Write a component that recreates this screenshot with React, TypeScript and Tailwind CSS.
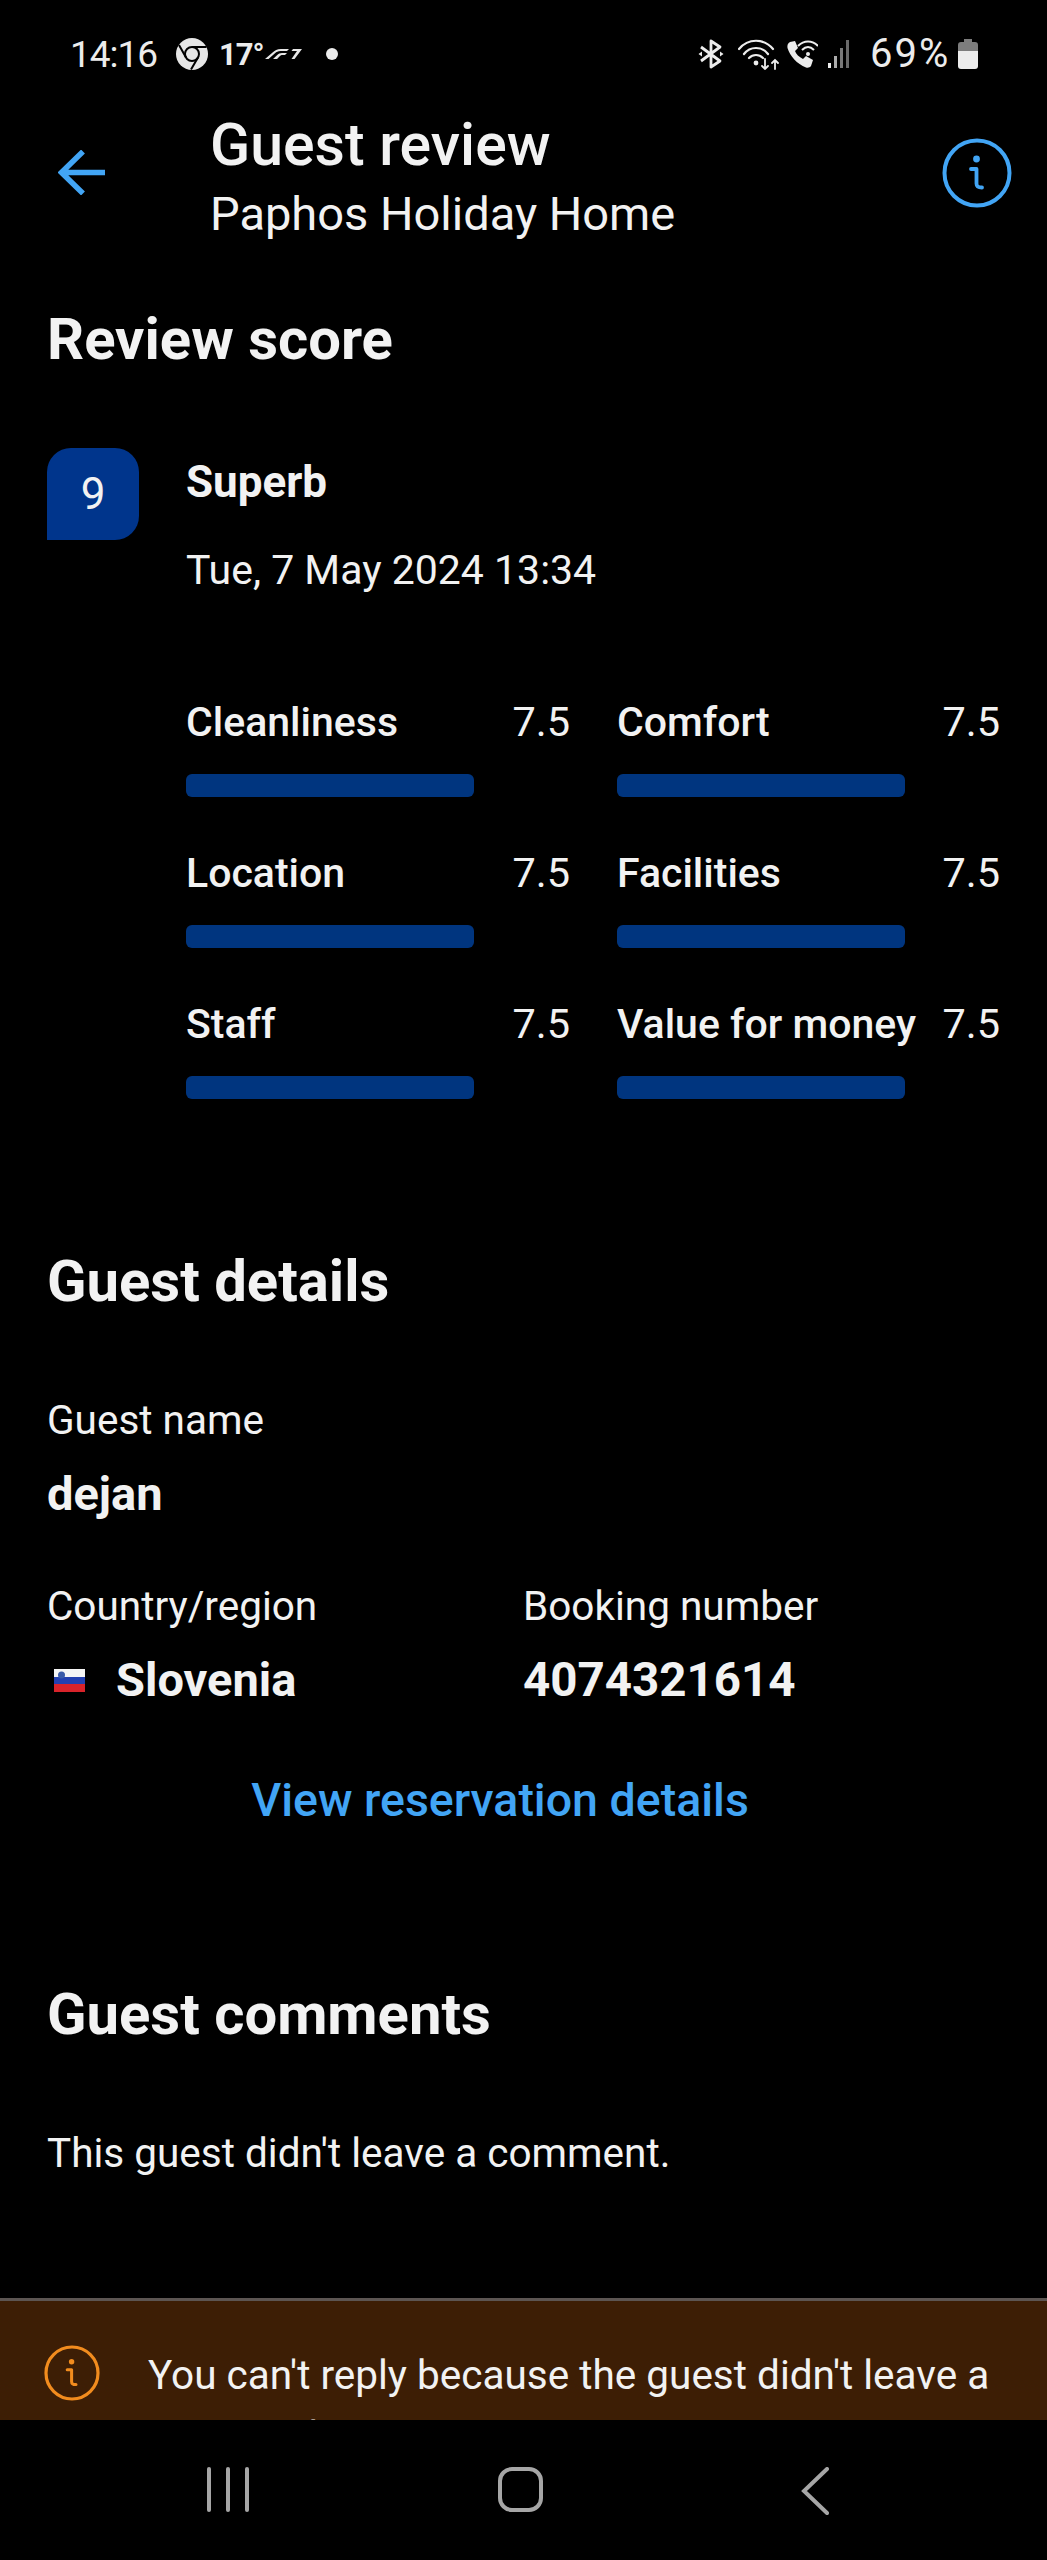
import React from 'react';

const ratings = [
  ['Cleanliness', 'Comfort'],
  ['Location', 'Facilities'],
  ['Staff', 'Value for money'],
];

const InfoIcon = ({ className }: { className: string }) => (
  <svg viewBox="0 0 70 70" className={className} fill="none" stroke="currentColor">
    <circle cx="35" cy="35" r="32.5" strokeWidth="4" />
    <circle cx="34.5" cy="21" r="3.4" fill="currentColor" stroke="none" />
    <path d="M29 31h5.5v14.5c0 3 1.5 4 5.5 4" strokeWidth="3.8" strokeLinecap="round" strokeLinejoin="round" />
  </svg>
);

const StatusLeft = () => (
  <div className="flex items-center">
    <span className="text-[37px] leading-none text-[#ececec] w-[106px] tracking-[-1px]">14:16</span>
    <svg viewBox="0 0 32 32" className="w-[32px] h-[32px]">
      <circle cx="16" cy="16" r="16" fill="#e6e6e6" />
      <circle cx="16" cy="16" r="7" fill="none" stroke="#000" strokeWidth="2" />
      <path d="M16 9h14.5M10 19.5 3 7M22 19.5 15 31.5" stroke="#000" strokeWidth="2" fill="none" />
    </svg>
    <span className="ml-[11px] text-[31px] leading-none font-bold text-[#ececec] w-[46px] tracking-[-1px]">17°</span>
    <svg viewBox="0 0 37 10" className="w-[37px] h-[10px]">
      <path d="M0 10 7 4C10 1.500 12 0 16 0H24L22 2H15.500C13 2 11.500 3 10 4.200L3.500 10Z" fill="#e6e6e6" />
      <path d="M8 10 12 6.200C13.500 4.800 15 4 17 4H22L20 6H17.500C16 6 15.500 6.500 14.500 7.500L12 10Z" fill="#e6e6e6" />
      <path d="M28 0H37L29.500 10H26.500L32 2H26.500Z" fill="#e6e6e6" />
    </svg>
    <span className="ml-[24px] w-[12px] h-[12px] rounded-full bg-[#ececec]" />
  </div>
);

const StatusRight = () => (
  <div className="flex items-center">
    <svg viewBox="0 0 26 30" className="w-[26px] h-[30px]" fill="none" stroke="#ececec" strokeWidth="2.800" strokeLinejoin="round">
      <path d="M3 8 22 22 13 28V2L22 8 3 22" />
      <path d="M0.5 15 4 12.5V17.5ZM25.5 15 22 12.5V17.5Z" fill="#ececec" stroke="none" />
    </svg>
    <svg viewBox="0 0 42 32" className="ml-[14px] w-[42px] h-[32px]" fill="none" stroke="#ececec" strokeWidth="2.2" strokeLinecap="round">
      <path d="M1 11C10 0 26 0 35 11" />
      <path d="M6 16C12 8 24 8 30 16" />
      <path d="M11 20C15 16 21 16 25 20" />
      <circle cx="18" cy="25" r="2.4" fill="#ececec" stroke="none" />
      <path d="M27 21V31M24 28l3 3 3-3M37 31V22M34 25l3-3 3 3" strokeWidth="1.8" />
    </svg>
    <svg viewBox="0 0 32 30" className="ml-[6px] w-[32px] h-[30px]" fill="none">
      <path d="M4 3 9 2 12 9 9 12C10 15 13 18 17 20L20 17 27 21 25 27C24 28.500 22 29 20 28.500 11 25 4 17 1.500 9 1 6 2 4 4 3Z" fill="#ececec" />
      <path d="M12 7C18 1 26 1 32 7M16 11C20 7 24 7 28 11" stroke="#ececec" strokeWidth="2" />
      <circle cx="22" cy="15" r="2" fill="#ececec" />
    </svg>
    <div className="ml-[10px] flex items-end gap-[3px] h-[28px] w-[27px]">
      <span className="w-[3px] h-[5px] bg-[#ececec]" />
      <span className="w-[3px] h-[12px] bg-[#ababab]" />
      <span className="w-[3px] h-[20px] bg-[#7a7a7a]" />
      <span className="w-[3px] h-[28px] bg-[#6a6a6a]" />
    </div>
    <span className="ml-[15px] text-[40px] leading-none text-[#ececec] w-[88px] tracking-[2px]">69%</span>
    <svg viewBox="0 0 20 30" className="w-[20px] h-[30px]">
      <path d="M6 0H14V3H17Q20 3 20 6V12H0V6Q0 3 3 3H6Z" fill="#7d7d7d" />
      <path d="M0 12H20V27Q20 30 17 30H3Q0 30 0 27Z" fill="#ececec" />
    </svg>
  </div>
);

const App = () => {
  return (
    <div className="w-[1047px] h-[2560px] bg-black flex flex-col overflow-hidden text-[#f2f2f2] font-['Roboto',sans-serif]">
      {/* Status bar */}
      <div className="h-[108px] shrink-0 flex items-center justify-between pl-[70px] pr-[69px]">
        <StatusLeft />
        <StatusRight />
      </div>

      {/* Header */}
      <div className="h-[142px] shrink-0 flex items-start pl-[58px] pr-[35px]">
        <svg viewBox="0 0 47 45" className="w-[47px] h-[45px] mt-[42px] text-[#42a5f5]" fill="none" stroke="currentColor" strokeWidth="5.500">
          <path d="M47 22.500H4M25 1.500 3.500 22.500 25 43.500" />
        </svg>
        <div className="ml-[105px] flex-1 pt-[2px]">
          <div className="text-[59px] leading-[70px] font-medium">Guest review</div>
          <div className="text-[47px] leading-[68px]">Paphos Holiday Home</div>
        </div>
        <InfoIcon className="w-[70px] h-[70px] mt-[30px] text-[#42a5f5]" />
      </div>

      <div className="flex-1 px-[47px] pt-[57px]">
        {/* Review score */}
        <h2 className="text-[58px] leading-[64px] font-bold">Review score</h2>
        <div className="flex mt-[77px]">
          <div className="w-[92px] h-[92px] shrink-0 rounded-t-[24px] rounded-br-[24px] bg-[#00358c] flex items-center justify-center text-[44px] leading-none">9</div>
          <div className="ml-[47px]">
            <div className="text-[44px] leading-[50px] font-bold mt-[9px]">Superb</div>
            <div className="text-[41px] leading-[50px] mt-[38px]">Tue, 7 May 2024 13:34</div>
          </div>
        </div>
        <div className="ml-[139px] mt-[102px] flex flex-col gap-[51px]">
          {ratings.map((row) => (
            <div key={row[0]} className="grid grid-cols-[384px_383px] gap-x-[47px]">
              {row.map((label) => (
                <div key={label}>
                  <div className="flex justify-between text-[41px] leading-[50px] font-medium">
                    <span>{label}</span>
                    <span className="font-normal text-[41.500px]">7.5</span>
                  </div>
                  <div className="w-[288px] h-[23px] mt-[27px] rounded-[6px] bg-[#00357f]" />
                </div>
              ))}
            </div>
          ))}
        </div>

        {/* Guest details */}
        <h2 className="text-[58px] leading-[64px] font-bold mt-[150px]">Guest details</h2>
        <div className="text-[40.500px] leading-[50px] mt-[82px]">Guest name</div>
        <div className="text-[47px] leading-[56px] font-bold mt-[21px]">dejan</div>
        <div className="grid grid-cols-[476px_1fr] mt-[59px]">
          <div>
            <div className="text-[40.500px] leading-[50px]">Country/region</div>
            <div className="flex items-center mt-[21px] h-[56px]">
              <svg viewBox="0 0 31 23" className="ml-[7px] w-[31px] h-[23px]">
                <rect width="31" height="8" fill="#f5f5f5" />
                <rect y="8" width="31" height="7" fill="#2340b0" />
                <rect y="15" width="31" height="8" fill="#d8232a" />
                <circle cx="7.500" cy="6" r="3.500" fill="#3a5aa8" />
              </svg>
              <span className="ml-[31px] text-[47px] leading-[56px] font-bold">Slovenia</span>
            </div>
          </div>
          <div>
            <div className="text-[40.500px] leading-[50px]">Booking number</div>
            <div className="text-[47.500px] leading-[56px] font-bold mt-[21px]">4074321614</div>
          </div>
        </div>
        <div className="text-center text-[46.500px] leading-[56px] font-medium text-[#42a5f5] mt-[64px] mr-[47px]">View reservation details</div>

        {/* Guest comments */}
        <h2 className="text-[58px] leading-[64px] font-bold mt-[154px]">Guest comments</h2>
        <div className="text-[40.500px] leading-[50px] mt-[82px]">This guest didn't leave a comment.</div>
      </div>

      {/* Reply banner */}
      <div className="h-[122px] shrink-0 overflow-hidden border-t-[3px] border-[#5c5552] bg-[#3d1e05] flex items-start pl-[44px] pr-[40px] pt-[45px]">
        <InfoIcon className="w-[56px] h-[56px] text-[#f28c1e] shrink-0 mt-[-1px]" />
        <div className="ml-[48px] text-[40.500px] leading-[58px]">You can't reply because the guest didn't leave a comment.</div>
      </div>

      {/* Navigation bar */}
      <div className="h-[140px] shrink-0 flex items-start pt-[47px] pl-[207px]">
        <div className="flex gap-[15px]">
          <span className="w-[4px] h-[45px] rounded-full bg-[#a6a6a6]" />
          <span className="w-[4px] h-[45px] rounded-full bg-[#a6a6a6]" />
          <span className="w-[4px] h-[45px] rounded-full bg-[#a6a6a6]" />
        </div>
        <div className="ml-[249px] w-[45px] h-[45px] rounded-[14px] border-[4px] border-[#a6a6a6]" />
        <svg viewBox="0 0 28 48" className="ml-[258px] w-[28px] h-[48px]" fill="none" stroke="#a6a6a6" strokeWidth="4" strokeLinecap="round">
          <path d="M26 2 3 24 26 46" />
        </svg>
      </div>
    </div>
  );
};

export default App;
